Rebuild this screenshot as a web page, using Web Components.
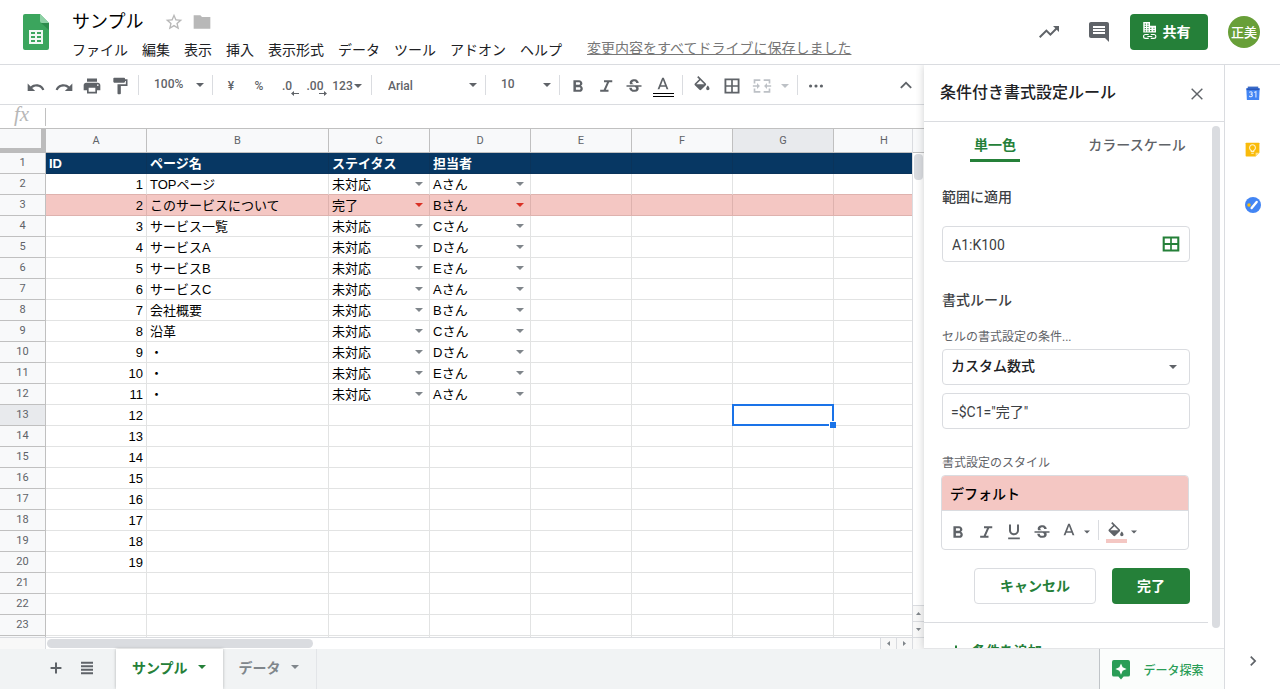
<!DOCTYPE html>
<html lang="ja">
<head>
<meta charset="utf-8">
<meta name="viewport" content="width=device-width, initial-scale=1">
<title>サンプル</title>
<style>
html, body { height: 100%; margin: 0; }
body {
    font-family: Roboto, "Noto Sans CJK JP", sans-serif;
    font-size: 14px;
    color: #202124;
    background: #fff;
    overflow: hidden;
}
</style>
</head>
<body>
<sheet-app>
    <doc-header slot="header" name="サンプル"></doc-header>
    <sheet-toolbar slot="work"></sheet-toolbar>
    <formula-bar slot="work"></formula-bar>
    <sheet-grid slot="work" selected="G13"></sheet-grid>
    <rule-panel slot="panel" range="A1:K100"></rule-panel>
    <sheet-tabs slot="tabs"></sheet-tabs>
    <side-rail slot="rail"></side-rail>
</sheet-app>

<script>
const ICONS = {
    undo: `<path d="M12.5 10c-2.65 0-5.05.99-6.9 2.600L2 9v9h9l-3.620-3.620c1.390-1.160 3.160-1.880 5.120-1.880 3.540 0 5.800 1.900 7.100 4.700l2.370-.78C20.900 12.500 17.150 10 12.500 10z"/>`,
    redo: `<path d="M18.400 12.600C16.550 10.990 14.150 10 11.500 10c-4.650 0-8.400 2.500-9.470 6.420L4.400 17.200c1.300-2.800 3.560-4.700 7.100-4.700 1.960 0 3.730.72 5.120 1.880L13 18h9V9l-3.600 3.600z"/>`,
    print: `<path d="M19 8H5c-1.66 0-3 1.34-3 3v6h4v4h12v-4h4v-6c0-1.66-1.34-3-3-3zm-3 11H8v-5h8v5zm3-7c-.55 0-1-.45-1-1s.45-1 1-1 1 .45 1 1-.45 1-1 1zm-1-9H6v4h12V3z"/>`,
    paint: `<path d="M18 4V3c0-.55-.45-1-1-1H5c-.55 0-1 .45-1 1v4c0 .55.45 1 1 1h12c.55 0 1-.45 1-1V6h1v4H9v11c0 .55.45 1 1 1h2c.55 0 1-.45 1-1v-9h8V4h-3z"/>`,
    bold: `<path d="M15.6 11.79c.97-.67 1.65-1.77 1.65-2.79 0-2.26-1.75-4-4-4H6.5v14h7.54c2.09 0 3.71-1.7 3.71-3.79 0-1.52-.86-2.82-2.15-3.42zM9.5 7.5h3.5c.83 0 1.5.67 1.5 1.5s-.67 1.5-1.5 1.5H9.5v-3zm4 9h-4v-3h4c.83 0 1.5.67 1.5 1.5s-.67 1.5-1.5 1.5z"/>`,
    italic: `<path d="M9.6 5v2.4h3.6L9.2 16.6H5V19h10v-2.4h-3.2l4-9.2H19.500V5z"/>`,
    underline: `<path d="M12 16c3.31 0 6-2.690 6-6V3h-2.4v7a3.6 3.6 0 0 1-7.2 0V3H6v7c0 3.310 2.690 6 6 6zM5 18.500v2.200h14v-2.200z"/>`,
    strike: `<path transform="translate(0 1)" d="M7.24 8.75c-.26-.48-.39-1.03-.39-1.67 0-.61.13-1.16.4-1.67.26-.5.63-.93 1.11-1.29.48-.35 1.05-.63 1.7-.83.66-.19 1.39-.29 2.18-.29.81 0 1.54.11 2.21.34.66.22 1.23.54 1.69.94.47.4.83.88 1.08 1.43.25.55.38 1.15.38 1.81h-3.01c0-.31-.05-.59-.15-.85-.09-.27-.24-.49-.44-.68-.2-.19-.45-.33-.75-.44-.3-.1-.66-.16-1.06-.16-.39 0-.74.04-1.03.13-.29.09-.53.21-.72.36-.19.16-.34.34-.44.55-.1.21-.15.43-.15.66 0 .48.25.88.74 1.21.38.25.77.48 1.41.7H7.39c-.05-.08-.11-.17-.15-.25zM21 12v-2H3v2h9.620c.18.07.4.14.55.2.37.17.66.34.87.51.21.17.35.36.43.57.07.2.11.43.11.69 0 .23-.05.45-.14.66-.09.2-.23.38-.42.53-.19.15-.42.26-.71.35-.29.08-.63.13-1.01.13-.43 0-.83-.04-1.18-.13s-.66-.23-.91-.42c-.25-.19-.45-.44-.59-.75-.14-.31-.25-.76-.25-1.21H6.400c0 .55.08 1.13.24 1.58.16.45.37.85.65 1.21.28.35.6.66.98.92.37.26.78.48 1.22.65.44.17.9.3 1.38.39.48.08.96.13 1.44.13.8 0 1.530-.09 2.180-.28s1.210-.45 1.670-.79c.46-.34.82-.77 1.070-1.270s.38-1.070.38-1.710c0-.6-.1-1.140-.31-1.610-.05-.11-.11-.23-.17-.33H21z"/>`,
    color: `<path d="M11 2L5.500 16h2.250l1.120-3h6.250l1.120 3h2.250L13 2h-2zm-1.380 9L12 4.670 14.380 11H9.620z"/>`,
    fill: `<path d="M16.560 8.940L7.620 0 6.210 1.410l2.380 2.380-5.150 5.150c-.59.59-.59 1.540 0 2.120l5.500 5.500c.29.29.68.44 1.060.44s.77-.15 1.060-.44l5.500-5.500c.59-.58.59-1.530 0-2.120zM5.210 10L10 5.210 14.790 10H5.210zM19 11.500s-2 2.170-2 3.500c0 1.100.9 2 2 2s2-.9 2-2c0-1.330-2-3.500-2-3.500z"/>`,
    borders: `<path d="M3 3v18h18V3H3zm8 15.800H5.200V13H11v5.800zm0-7.800H5.200V5.200H11V11zm7.800 7.800H13V13h5.800v5.800zm0-7.800H13V5.200h5.800V11z"/>`,
    range: `<path d="M2 3v18h20V3H2zm9 15.500H4.500v-5.300H11v5.300zm0-7.700H4.500V5.500H11v5.300zm8.500 7.700H13v-5.300h6.500v5.300zm0-7.700H13V5.500h6.500v5.300z"/>`,
    merge: `<path d="M2 4h8v2H4v3H2zM14 4h8v5h-2V6h-6zM2 15h2v3h6v2H2zM20 15h2v5h-8v-2h6zM1 11h5V8.500l3.500 3.500L6 15.500V13H1zM23 11h-5V8.500L14.500 12l3.500 3.500V13h5z"/>`,
    more: `<circle cx="5.500" cy="12" r="1.900"/><circle cx="12" cy="12" r="1.900"/><circle cx="18.500" cy="12" r="1.900"/>`,
    up: `<path d="M12 6.500l-7 7L6.600 15 12 9.700l5.400 5.300 1.600-1.500z"/>`,
    right: `<path d="M10 6L8.590 7.410 13.170 12l-4.580 4.590L10 18l6-6z"/>`,
    arrow: `<path d="M6 9l6 6 6-6z"/>`,
    trend: `<path d="M16 6l2.290 2.290-4.880 4.880-4-4L2 16.590 3.410 18l6-6 4 4 6.300-6.290L22 12V6z"/>`,
    comment: `<path d="M21.990 4c0-1.100-.89-2-1.990-2H4c-1.100 0-2 .9-2 2v12c0 1.100.9 2 2 2h14l4 4-.01-18zM18 14H6v-2h12v2zm0-3H6V9h12v2zm0-3H6V6h12v2z"/>`,
    star: `<path d="M22 9.240l-7.190-.62L12 2 9.190 8.630 2 9.240l5.460 4.730L5.820 21 12 17.270 18.180 21l-1.630-7.030L22 9.240zM12 15.400l-3.760 2.270 1-4.280-3.320-2.880 4.380-.38L12 6.100l1.710 4.040 4.380.38-3.320 2.880 1 4.280L12 15.400z"/>`,
    folder: `<path d="M10 4H2v16h20V6H12z"/>`,
    close: `<path d="M19 6.200L17.800 5 12 10.800 6.200 5 5 6.200l5.800 5.800L5 17.800 6.200 19l5.800-5.800 5.800 5.800 1.200-1.200-5.800-5.800z"/>`,
    plus: `<path d="M18.500 13.200h-5.300v5.300h-2.400v-5.300H5.500v-2.400h5.300V5.500h2.400v5.300h5.300z"/>`,
    list: `<path d="M4 3.800h16v2.600H4zM4 8.400h16V11H4zM4 13h16v2.600H4zM4 17.600h16v2.600H4z"/>`,
    building: `<path fill-rule="evenodd" d="M3 0h9v5h8v9H3zM5 2v1.500h1.500V2zM8.500 2v1.500H10V2zM5 5v1.500h1.500V5zM8.500 5v1.500H10V5zM5 8v1.500h1.500V8zM8.500 8v1.500H10V8zM5 11v1.500h1.500V11zM8.500 11v1.500H10V11zM12 7.500V9h2V7.500zM16.500 7.500V9H18V7.500zM12 10.800v1.500h2v-1.500zM16.500 10.800v1.500H18v-1.500z"/><path d="M10.300 16.700H6a2.600 2.600 0 0 0 0 5.200h4.300M13 16.700h4.200a2.600 2.600 0 0 1 0 5.200H13M8.500 19.300h6.500" fill="none" stroke="currentColor" stroke-width="1.500"/>`,
    explore: `<path d="M2.500 0h19A2.500 2.500 0 0 1 24 2.500v17a2.500 2.500 0 0 1-2.500 2.500H15.500L12 26l-3.500-4H2.500A2.500 2.500 0 0 1 0 19.500v-17A2.500 2.500 0 0 1 2.500 0z"/><path fill="#fff" d="M12 4.500l2.200 5.300L19.500 12l-5.300 2.200L12 19.500l-2.200-5.300L4.500 12l5.300-2.200z"/>`,
    calendar: `<path fill="#3a6bc6" d="M3 1h18v5H3z"/><path fill="#4285f4" d="M.500 4h23l-1 20h-21z"/><path fill="#2a56b8" d="M1 4h22v3H1z"/><path d="M5.500 11q3.500-2.500 5 0 .5 2.500-2.500 3 3.500.4 2.800 3-2 2.800-5.300.2M14 11l3-1.500v10" fill="none" stroke="#dbe7fd" stroke-width="1.900"/>`,
    keep: `<path fill="#f9bb0b" d="M2 1h20a1 1 0 0 1 1 1v15l-6 6H2a1 1 0 0 1-1-1V2a1 1 0 0 1 1-1z"/><path fill="#fde293" d="M23 17l-6 6v-6z"/><path d="M10 15v-1.500a4.700 4.700 0 1 1 4 0V15zM10 18h4" fill="none" stroke="#fff3cd" stroke-width="1.700"/>`,
    tasks: `<circle cx="12" cy="12" r="12" fill="#4285f4"/><circle cx="6" cy="12" r="2.600" fill="#f9bb0b"/><path d="M10 16.500l7.500-9" stroke="#fff" stroke-width="3.600" stroke-linecap="round"/>`
};

class GIcon extends HTMLElement {
    connectedCallback() {
        const size = this.getAttribute("size") || 20;
        this.attachShadow({mode:"open"}).innerHTML = `
<style>
:host { display: inline-flex; flex: none; }
svg { display: block; fill: currentColor; overflow: visible; }
</style>
<svg width="${size}" height="${size}" viewBox="0 0 24 24" aria-hidden="true">${ICONS[this.getAttribute("name")]}</svg>
`;
    }
}

const BUTTON_RESET = `
button, select, input {
    font: inherit; color: inherit; background: none; border: 0;
    margin: 0; padding: 0; box-sizing: border-box; border-radius: 0;
}
button { display: inline-flex; align-items: center; justify-content: center; cursor: pointer; white-space: nowrap; }
select { appearance: none; width: 100%; height: 100%; cursor: pointer; }
`;

class SheetApp extends HTMLElement {
    constructor() {
        super();
        this.attachShadow({mode:"open"}).innerHTML = `
<style>
:host { display: flex; flex-direction: column; height: 100vh; }
.body { flex: 1; display: flex; min-height: 0; }
.main { flex: 1; display: flex; flex-direction: column; min-width: 0; }
.top { flex: 1; display: flex; min-height: 0; }
.work { flex: 1; display: flex; flex-direction: column; min-width: 0; overflow: hidden; }
</style>
<slot name="header"></slot>
<div class="body">
    <div class="main">
        <div class="top">
            <div class="work"><slot name="work"></slot></div>
            <slot name="panel"></slot>
        </div>
        <slot name="tabs"></slot>
    </div>
    <slot name="rail"></slot>
</div>
`;
    }
}

class DocHeader extends HTMLElement {
    connectedCallback() {
        const menus = ["ファイル","編集","表示","挿入","表示形式","データ","ツール","アドオン","ヘルプ"];
        this.attachShadow({mode:"open"}).innerHTML = `
<style>
${BUTTON_RESET}
:host { display: flex; align-items: center; height: 64px; border-bottom: 1px solid #dadce0; padding: 0 20px 0 23px; flex: none; }
.logo { flex: none; width: 26px; height: 36px; }
.text { flex: 1; min-width: 0; padding: 8px 0 0 16px; }
.title { display: flex; align-items: center; height: 28px; padding-left: 7px; gap: 8px; }
h1 { margin: 0 13px 0 0; font-size: 18px; line-height: 28px; font-weight: 400; color: #000; }
.title button { color: #b8b8b8; }
nav { display: flex; align-items: center; height: 28px; white-space: nowrap; }
nav button { padding: 0 7px; line-height: 24px; }
nav a { margin-left: 18px; color: #777; line-height: 20px; padding-bottom: 4px; }
.actions { display: flex; align-items: center; }
.tool { color: #5f6368; width: 50px; height: 40px; }
.share { gap: 4px; height: 36px; width: 78px; padding: 0 7px 2px 0; margin: 0 20px 0 6px; border-radius: 4px; background: #258039; color: #fff; font-weight: 700; }
.avatar { width: 32px; height: 32px; padding-bottom: 2px; border-radius: 50%; background: #689f38; color: #fff; font-size: 13px; font-weight: 500; }
</style>
<svg class="logo" viewBox="0 0 26 36" aria-hidden="true">
    <path fill="#3ba55d" d="M2 0h15l9 9v25a2 2 0 0 1-2 2H2a2 2 0 0 1-2-2V2a2 2 0 0 1 2-2z"/>
    <path fill="#2c8c4c" d="M18 9h8v7z"/>
    <path fill="#8ed1a5" d="M17 0l9 9h-7a2 2 0 0 1-2-2z"/>
    <path fill="#f1f8f3" fill-rule="evenodd" d="M6 16h14v14H6zM8 18v2h4v-2zM14 18v2h4v-2zM8 22v2h4v-2zM14 22v2h4v-2zM8 26v2h4v-2zM14 26v2h4v-2z"/>
</svg>
<div class="text">
    <div class="title">
        <h1>${this.getAttribute("name")}</h1>
        <button aria-label="スターを付ける"><g-icon name="star"></g-icon></button>
        <button aria-label="移動"><g-icon name="folder"></g-icon></button>
    </div>
    <nav>${menus.map(m => `<button>${m}</button>`).join("")}<a href="#">変更内容をすべてドライブに保存しました</a></nav>
</div>
<div class="actions">
    <button class="tool" aria-label="アクティビティ"><g-icon name="trend" size="24"></g-icon></button>
    <button class="tool" aria-label="コメント"><g-icon name="comment" size="24"></g-icon></button>
    <button class="share"><g-icon name="building" size="18"></g-icon>共有</button>
    <button class="avatar">正美</button>
</div>
`;
    }
}

class SheetToolbar extends HTMLElement {
    constructor() {
        super();
        const btn = (icon, label, cls = "") => `<button class="${cls}" aria-label="${label}"><g-icon name="${icon}"></g-icon></button>`;
        const drop = (value, label, cls) => `<label class="drop ${cls}"><select aria-label="${label}"><option>${value}</option></select><g-icon name="arrow" size="16"></g-icon></label>`;
        this.attachShadow({mode:"open"}).innerHTML = `
<style>
${BUTTON_RESET}
:host { display: flex; align-items: center; height: 39px; border-bottom: 1px solid #dadce0; padding: 0 4px 0 22px; color: #5f6368; font-size: 12px; font-weight: 500; flex: none; }
button { width: 28px; height: 28px; padding-top: 2px; flex: none; }
button.wide { width: 30px; }
hr { width: 1px; height: 20px; margin: 0 4px; border: 0; background: #dadce0; flex: none; }
.drop { display: flex; align-items: center; height: 28px; flex: none; box-sizing: border-box; }
.drop g-icon { margin-left: -16px; pointer-events: none; }
.size { width: 65px; padding-left: 11px; }
.size select { padding-bottom: 2px; }
.font { width: 105px; padding-left: 12px; }
.font select { padding-top: 2px; }
.num { width: 38px; }
.num g-icon { margin: 0 -2px 0 -3px; }
.dec { position: relative; }
.dec svg { position: absolute; right: 2px; bottom: 3px; fill: currentColor; }
.off { color: #bdc1c6; }
.off.arrow { width: 16px; }
.text-color { position: relative; }
.text-color::after { content: ""; position: absolute; left: 5px; right: 4px; bottom: 2px; height: 2px; border: solid #000; border-width: 1px 0; }
.end { margin-left: auto; }
</style>
${btn("undo", "元に戻す")}${btn("redo", "やり直し")}${btn("print", "印刷")}${btn("paint", "書式を貼り付け")}
<hr>${drop("100%", "ズーム", "size")}<hr>
<button>¥</button><button>%</button>
<button class="dec">.0<svg width="8" height="5" viewBox="0 0 8 5"><path d="M0 2.500L3 0v2h5v1H3v2z"/></svg></button>
<button class="dec">.00<svg width="8" height="5" viewBox="0 0 8 5"><path d="M8 2.500L5 0v2H0v1h5v2z"/></svg></button>
<button class="num">123<g-icon name="arrow" size="16"></g-icon></button>
<hr>${drop("Arial", "フォント", "font")}<hr>${drop("10", "フォントサイズ", "size")}<hr>
${btn("bold", "太字")}${btn("italic", "斜体")}${btn("strike", "取り消し線")}${btn("color", "テキストの色", "wide text-color")}
<hr>${btn("fill", "塗りつぶしの色", "wide")}${btn("borders", "枠線", "wide")}${btn("merge", "セルを結合", "wide off")}
<button class="off arrow" aria-label="結合の種類"><g-icon name="arrow" size="16"></g-icon></button>
<hr>${btn("more", "その他")}${btn("up", "メニューを隠す", "end")}
`;
    }
}

class FormulaBar extends HTMLElement {
    constructor() {
        super();
        this.attachShadow({mode:"open"}).innerHTML = `
<style>
${BUTTON_RESET}
:host { display: flex; align-items: center; height: 23px; border-bottom: 1px solid #c0c0c0; flex: none; }
label { width: 45px; box-sizing: border-box; padding: 0 0 6px 14px; font: italic 21px/20px "Liberation Serif", serif; color: #b7b7b7; }
input { flex: 1; height: 18px; border-left: 1px solid #c0c0c0; padding: 0 6px; outline: 0; }
</style>
<label for="fx">fx</label><input id="fx" type="text">
`;
    }
}

const COLUMNS = ["A","B","C","D","E","F","G","H"];
const PAGES = ["TOPページ","このサービスについて","サービス一覧","サービスA","サービスB","サービスC","会社概要","沿革","・","・","・"];
const PEOPLE = ["A","B","C","D","E"];

class SheetGrid extends HTMLElement {
    connectedCallback() {
        this.attachShadow({mode:"open"}).innerHTML = `
<style>
${BUTTON_RESET}
:host { flex: 1; display: flex; flex-direction: column; min-height: 0; }
.view { flex: 1; display: flex; min-height: 0; }
.cells { flex: 1; min-width: 0; overflow: hidden; }
table { table-layout: fixed; border-spacing: 0; width: 0; font: 13px/18px "Liberation Sans", "Noto Sans CJK JP", sans-serif; color: #000; }
col { width: 101px; }
col.head { width: 46px; }
col.b { width: 182px; }
th, td { box-sizing: border-box; height: 21px; padding: 2px 3px 0; overflow: hidden; white-space: nowrap; border: solid #e2e3e3; border-width: 0 1px 1px 0; text-align: left; }
th { font: 11px/20px Roboto, sans-serif; color: #5f6368; background: #f8f9fa; border-color: #c0c0c0; text-align: center; padding: 0; }
thead th { height: 24px; }
thead th:first-child { border-right: 5px solid #bcbcbc; border-bottom: 5px solid #bcbcbc; }
th.on { background: #e8eaed; }
td:nth-child(2) { text-align: right; }
tr.title td { background: #073763; border-color: #0a335a; color: #fff; font-weight: 700; text-align: left; }
tr.done td { background: #f4c7c3; border-color: #deb2ae; }
tr.before td { border-bottom-color: #deb2ae; }
.pick { display: flex; justify-content: space-between; align-items: center; height: 18px; }
.pick button { color: #80868b; width: 16px; height: 16px; margin: 0 -1px 2px 0; }
tr.done .pick button { color: #d93025; }
td.selected { position: relative; overflow: visible; }
td.selected::before { content: ""; position: absolute; inset: -1px; border: 2px solid #1a73e8; z-index: 1; }
td.selected::after { content: ""; position: absolute; right: -3px; bottom: -3px; width: 6px; height: 6px; background: #1a73e8; border: solid #fff; border-width: 1px 0 0 1px; z-index: 2; }
.vscroll { width: 12px; box-sizing: border-box; border-left: 1px solid #dadce0; display: flex; flex-direction: column; }
.vscroll .cap { height: 23px; background: #f8f9fa; border-bottom: 1px solid #c0c0c0; }
.vscroll .track { flex: 1; padding: 1px 1px 0 1px; }
.vscroll .thumb { height: 26px; border-radius: 4px; background: #dadce0; }
.vscroll button { height: 16px; border-top: 1px solid #dadce0; background: #f8f8f8; }
.hscroll { display: flex; height: 11px; border-top: 1px solid #dadce0; }
.hscroll .cap { width: 45px; border-right: 1px solid #dadce0; background: #f8f8f8; }
.hscroll .track { flex: 1; padding: 1px; }
.hscroll .thumb { height: 9px; width: 32%; border-radius: 5px; background: #dadce0; }
.hscroll button { width: 16px; border-left: 1px solid #dadce0; background: #f8f8f8; }
.hscroll .corner { width: 11px; border-left: 1px solid #dadce0; background: #f8f8f8; }
.vscroll svg, .hscroll svg { fill: #80868b; }
</style>
<div class="view">
    <div class="cells"><table>
        <colgroup><col class="head"><col><col class="b"><col><col><col><col><col><col></colgroup>
        <thead><tr><th></th>${COLUMNS.map(c => `<th scope="col" class="${this.isOn(c)}">${c}</th>`).join("")}</tr></thead>
        <tbody>${this.rows()}</tbody>
    </table></div>
    <div class="vscroll"><div class="cap"></div><div class="track"><div class="thumb"></div></div>
        <button aria-label="上へ"><svg width="5" height="3" viewBox="0 0 5 3"><path d="M0 3l2.500-3L5 3z"/></svg></button>
        <button aria-label="下へ"><svg width="5" height="3" viewBox="0 0 5 3"><path d="M0 0l2.500 3L5 0z"/></svg></button>
    </div>
</div>
<div class="hscroll"><div class="cap"></div><div class="track"><div class="thumb"></div></div>
    <button aria-label="左へ"><svg width="3" height="5" viewBox="0 0 3 5"><path d="M3 0L0 2.500 3 5z"/></svg></button>
    <button aria-label="右へ"><svg width="3" height="5" viewBox="0 0 3 5"><path d="M0 0l3 2.500L0 5z"/></svg></button>
    <div class="corner"></div>
</div>
`;
    }

    isOn(part) {
        const [, col, row] = this.getAttribute("selected").match(/([A-Z]+)(\d+)/);
        return part === col || part === row ? "on" : "";
    }

    rows() {
        const pick = text => `<div class="pick">${text}<button aria-label="${text}を変更"><g-icon name="arrow" size="16"></g-icon></button></div>`;
        let html = "";
        for(let n = 1; n <= 23; n++){
            let values = [];
            if(n === 1) values = ["ID","ページ名","ステイタス","担当者"];
            else if(n <= 20) values = [n - 1];
            if(n > 1 && n <= 12){
                values.push(PAGES[n-2], pick(n === 3 ? "完了" : "未対応"), pick(PEOPLE[(n-2) % 5] + "さん"));
            }
            const cls = n === 1 ? "title" : n === 2 ? "before" : n === 3 ? "done" : "";
            html += `<tr class="${cls}"><th scope="row" class="${this.isOn(String(n))}">${n}</th>`;
            html += COLUMNS.map((c, i) => `<td class="${c + n === this.getAttribute("selected") ? "selected" : ""}">${values[i] ?? ""}</td>`).join("");
            html += "</tr>";
        }
        return html + `<tr><th></th>${"<td></td>".repeat(COLUMNS.length)}</tr>`;
    }
}

class RulePanel extends HTMLElement {
    connectedCallback() {
        const btn = (icon, label, cls = "") => `<button class="${cls}" aria-label="${label}"><g-icon name="${icon}"></g-icon></button>`;
        const arrow = `<button class="more" aria-label="色を選択"><g-icon name="arrow" size="12"></g-icon></button>`;
        this.attachShadow({mode:"open"}).innerHTML = `
<style>
${BUTTON_RESET}
:host { display: flex; flex-direction: column; width: 300px; flex: none; background: #fff; box-shadow: 0 0 8px rgba(60,64,67,0.25); clip-path: inset(0 0 0 -8px); color: #3c4043; border-bottom: 1px solid #e4e5e7; z-index: 1; }
header { display: flex; justify-content: space-between; align-items: center; height: 56px; padding: 0 15px 0 16px; border-bottom: 1px solid #dadce0; flex: none; }
h2 { margin: 0; font-size: 16px; line-height: 24px; font-weight: 500; color: #202124; }
header button { width: 24px; height: 24px; padding-top: 2px; color: #5f6368; }
.scroll { flex: 1; display: flex; min-height: 0; }
.content { flex: 1; min-width: 0; overflow: hidden; }
.bar { width: 8px; margin: 4px 4px 20px; border-radius: 4px; background: #dadce0; }
.tabs { display: flex; height: 40px; }
.tabs div { flex: 1; display: flex; justify-content: center; }
.tabs button { padding: 8px 4px 0; line-height: 24px; font-weight: 500; color: #5f6368; border-bottom: 3px solid transparent; border-radius: 2px 2px 0 0; }
.tabs .current { color: #258039; font-weight: 700; border-color: #258039; }
form { padding: 0 18px; }
h3 { margin: 0; font-size: 14px; line-height: 24px; font-weight: 500; }
.note { display: block; font-size: 12px; line-height: 20px; color: #5f6368; }
.field { display: flex; align-items: center; height: 36px; box-sizing: border-box; border: 1px solid #dadce0; border-radius: 4px; padding: 0 8px 0 9px; }
.field input { flex: 1; min-width: 0; height: 100%; padding-top: 2px; outline: 0; color: #3c4043; }
.field button { color: #258039; }
.field select { font-weight: 500; color: #202124; padding-bottom: 2px; }
.field select + g-icon { margin-left: -16px; color: #5f6368; pointer-events: none; }
h3.range { margin: 23px 0 17px; }
h3.rule { margin: 26px 0 15px; }
.condition { margin-top: 2px; padding-left: 8px; }
.formula { margin: 8px 0 24px; padding-left: 8px; }
.formula input { padding-top: 0; }
.style { border: 1px solid #dadce0; border-radius: 4px; overflow: hidden; margin: 2px 1px 18px -1px; }
.preview { width: 100%; height: 35px; padding: 0 8px; background: #f4c7c3; justify-content: flex-start; color: #000; font-weight: 500; border-bottom: 1px solid #dadce0; }
.tools { display: flex; align-items: center; height: 38px; padding: 0 2px; color: #5f6368; }
.tools button { width: 28px; height: 32px; padding-top: 3px; }
.tools .color, .tools .fill { width: 26px; }
.tools .more { width: 12px; margin-right: 1px; margin-left: -1px; padding-top: 4px; }
.tools hr { width: 1px; height: 20px; margin: 0 4px; border: 0; background: #dadce0; }
.tools .fill { position: relative; }
.tools .fill::after { content: ""; position: absolute; left: 3px; right: 2px; bottom: 3px; height: 4px; background: #f4c7c3; }
.actions { display: flex; justify-content: flex-end; gap: 16px; }
.actions button { height: 36px; padding: 0 25px 2px; border-radius: 4px; font-weight: 700; color: #258039; }
.actions .cancel { border: 1px solid #dadce0; }
.actions .ok { background: #258039; color: #fff; }
.add { border-top: 1px solid #dadce0; margin-top: 18px; padding: 18px 22px; }
.add button { color: #258039; font-weight: 700; line-height: 20px; gap: 6px; }
</style>
<header><h2>条件付き書式設定ルール</h2>${btn("close", "閉じる")}</header>
<div class="scroll">
    <div class="content">
        <div class="tabs"><div><button class="current">単一色</button></div><div><button>カラースケール</button></div></div>
        <form>
            <h3 class="range"><label for="range">範囲に適用</label></h3>
            <div class="field"><input id="range" type="text" value="${this.getAttribute("range")}"><button type="button" aria-label="データ範囲を選択"><g-icon name="range"></g-icon></button></div>
            <h3 class="rule">書式ルール</h3>
            <label class="note" for="condition">セルの書式設定の条件...</label>
            <div class="field condition"><select id="condition"><option>カスタム数式</option></select><g-icon name="arrow" size="16"></g-icon></div>
            <div class="field formula"><input type="text" aria-label="値または数式" value='=$C1="完了"'></div>
            <div class="note">書式設定のスタイル</div>
            <div class="style">
                <button type="button" class="preview">デフォルト</button>
                <div class="tools">${btn("bold", "太字")}${btn("italic", "斜体")}${btn("underline", "下線")}${btn("strike", "取り消し線")}${btn("color", "テキストの色", "color")}${arrow}<hr>${btn("fill", "塗りつぶしの色", "fill")}${arrow}</div>
            </div>
            <div class="actions"><button type="button" class="cancel">キャンセル</button><button type="button" class="ok">完了</button></div>
        </form>
        <div class="add"><button><g-icon name="plus"></g-icon>条件を追加</button></div>
    </div>
    <div class="bar"></div>
</div>
`;
    }
}

class SheetTabs extends HTMLElement {
    constructor() {
        super();
        this.attachShadow({mode:"open"}).innerHTML = `
<style>
${BUTTON_RESET}
:host { display: flex; align-items: stretch; height: 40px; background: #f1f3f4; padding-left: 40px; color: #5f6368; flex: none; }
.tool { width: 31px; padding-bottom: 2px; }
.tab { padding: 0 13px 4px 16px; gap: 6px; font-weight: 700; color: #80868b; border-right: 1px solid #e3e5e8; }
.current { margin-left: 14px; background: #fff; color: #258039; border: 0; box-shadow: 0 0 3px rgba(60,64,67,0.35); }
.explore { margin-left: auto; border-left: 1px solid #c0c4c8; background: #fbfdfc; width: 125px; padding-right: 8px; gap: 13px; font-size: 12px; font-weight: 500; color: #2a9d57; }
</style>
<button class="tool" aria-label="シートを追加"><g-icon name="plus"></g-icon></button>
<button class="tool" aria-label="すべてのシート"><g-icon name="list" size="18"></g-icon></button>
<button class="tab current">サンプル<g-icon name="arrow" size="16"></g-icon></button>
<button class="tab">データ<g-icon name="arrow" size="16"></g-icon></button>
<button class="explore"><g-icon name="explore" size="18"></g-icon>データ探索</button>
`;
    }
}

class SideRail extends HTMLElement {
    constructor() {
        super();
        this.attachShadow({mode:"open"}).innerHTML = `
<style>
${BUTTON_RESET}
:host { display: flex; flex-direction: column; width: 55px; border-left: 1px solid #dadce0; flex: none; color: #5f6368; }
button { height: 56px; }
.hide { margin-top: auto; }
</style>
<button aria-label="カレンダー"><g-icon name="calendar" size="14"></g-icon></button>
<button aria-label="Keep"><g-icon name="keep" size="15"></g-icon></button>
<button aria-label="ToDo"><g-icon name="tasks" size="16"></g-icon></button>
<button class="hide" aria-label="サイドパネルを非表示"><g-icon name="right"></g-icon></button>
`;
    }
}

customElements.define("g-icon", GIcon);
customElements.define("sheet-app", SheetApp);
customElements.define("doc-header", DocHeader);
customElements.define("sheet-toolbar", SheetToolbar);
customElements.define("formula-bar", FormulaBar);
customElements.define("sheet-grid", SheetGrid);
customElements.define("rule-panel", RulePanel);
customElements.define("sheet-tabs", SheetTabs);
customElements.define("side-rail", SideRail);
</script>
</body>
</html>
